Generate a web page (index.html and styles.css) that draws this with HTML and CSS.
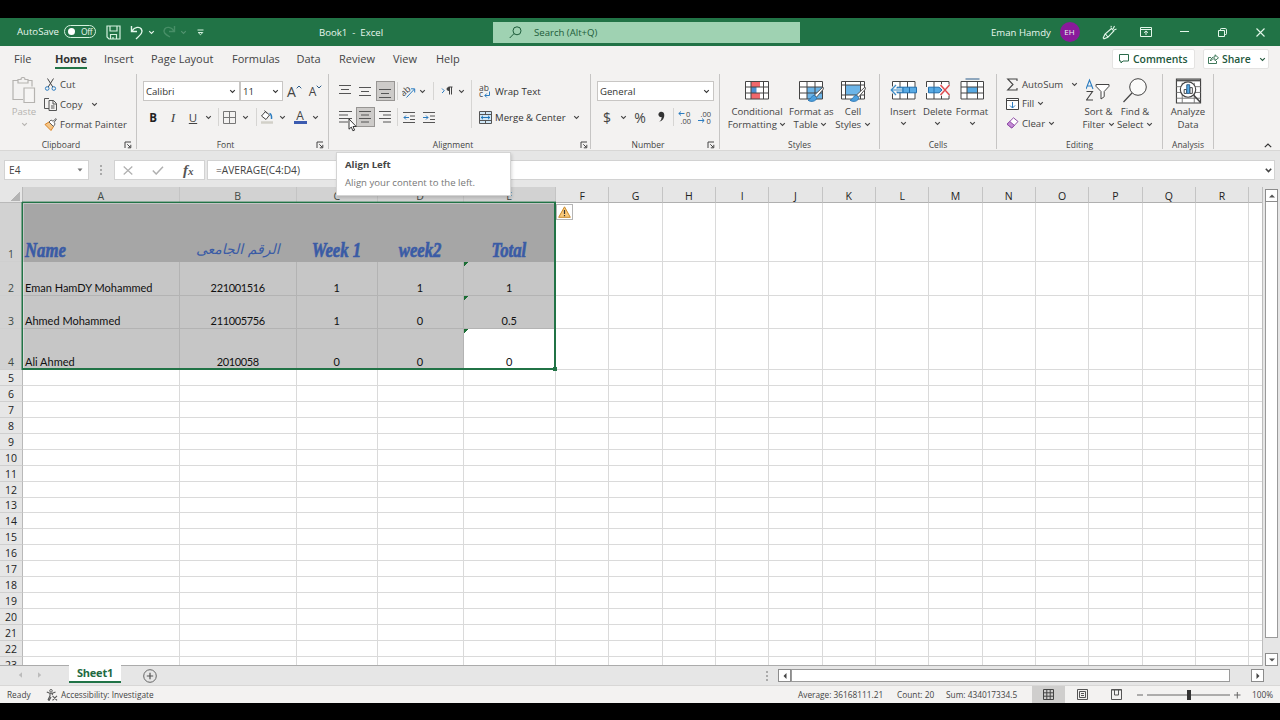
FILE: index.html
```html
<!DOCTYPE html>
<html lang="en">
<head>
    <title>Book1 - Excel</title>
    <meta charset="UTF-8">
    <meta name="viewport" content="width=device-width, initial-scale=1.0">
    <link rel="stylesheet" href="styles.css">
</head>
<body>
    <svg class="defs" width="0" height="0">
        <symbol id="chev" viewBox="0 0 7 5"><path d="M1.2 1.2 3.5 3.5 5.8 1.2" fill="none" stroke="currentColor" stroke-width="1.1"/></symbol>
        <symbol id="launch" viewBox="0 0 8 8"><path d="M1 7V1h6M3.3 3.3l3 3M6.8 3.8v3h-3" fill="none" stroke="currentColor" stroke-width="1"/></symbol>
        <symbol id="brush" viewBox="0 0 18 18"><path d="M17 1 8.5 9l2 2.2L17.4 3z" fill="#fff" stroke="#555" stroke-width="1"/><path d="M8.2 9.2c-3 .3-2.4 3.5-6.2 5 2.8 2.3 8.8 1.3 8.7-2.7z" fill="#4d9fdc" stroke="#2470ae" stroke-width=".8"/></symbol>
    </svg>

    <div class="window">
        <header class="titlebar">
            <span>AutoSave</span>
            <span class="toggle"><i></i>Off</span>
            <svg class="mid" width="15" height="15" viewBox="0 0 15 15"><path d="M1 1h13v13H3l-2-2zM4 1v5h7V1M4.5 14V9.5h6V14M7 12v2" fill="none" stroke="#d5f2df" stroke-width="1.2"/></svg>
            <svg class="mid" width="14" height="15" viewBox="0 0 14 15"><path d="M1.5 1v5.5H7M1.7 6.3C5 1.5 9.5 1.5 11.3 4c2 3 0 5-5.3 10" fill="none" stroke="#e3f7ea" stroke-width="1.4"/></svg>
            <svg class="mid" width="7" height="5"><use href="#chev"/></svg>
            <svg class="mid dim" width="14" height="15" viewBox="0 0 14 15"><path d="M12.5 1v5.5H7M12.3 6.3C9 1.5 4.5 1.5 2.7 4c-2 3 0 5 5.3 8" fill="none" stroke="#b8e0c6" stroke-width="1.4"/></svg>
            <svg class="mid dim" width="7" height="5"><use href="#chev"/></svg>
            <svg class="mid" width="7" height="7" viewBox="0 0 7 7"><path d="M.5 1h6M1.2 3.5h4.6L3.5 5.8z" fill="none" stroke="#d5f2df"/></svg>
            <span class="doc-name">Book1&nbsp; -&nbsp; Excel</span>
            <div class="search">
                <svg width="13" height="13" viewBox="0 0 13 13"><circle cx="8" cy="4.8" r="4" fill="none" stroke="#1d5c3a"/><path d="M5 7.6.7 12" stroke="#1d5c3a"/></svg>
                <span>Search (Alt+Q)</span>
            </div>
            <span class="user">Eman Hamdy</span>
            <span class="avatar mid">EH</span>
            <svg class="mid" width="15" height="15" viewBox="0 0 15 15"><path d="M9.5 3.5 3 9.2 1.2 13l.8.8 3.8-1.5 6-6.3zM3.5 9l2.4 3M11 4l1.5-3M12 5l2.5-1M9 2.5 9.3.8" fill="none" stroke="#e3f7ea" stroke-width="1.1"/></svg>
            <svg class="mid" width="12" height="10" viewBox="0 0 12 10"><path d="M.5.5h11v9H.5zM.5 2.5h11M6 8V4M4 5.8 6 3.9l2 1.9" fill="none" stroke="#e3f7ea"/></svg>
            <svg class="mid" width="9" height="2"><path d="M0 .5h9" stroke="#e3f7ea"/></svg>
            <svg class="mid" width="9" height="9" viewBox="0 0 9 9"><path d="M.5 2.5h6v6h-6zM2.5 2.5V1.2q0-.7.7-.7h4q1.3 0 1.3 1.3v4q0 .7-.7.7H6.5" fill="none" stroke="#e3f7ea"/></svg>
            <svg class="close" width="9" height="9"><path d="M.5.5l8 8M8.5.5l-8 8" stroke="#e3f7ea" stroke-width="1.1"/></svg>
        </header>

        <nav class="tabs">
            <span>File</span>
            <span class="active"><b>Home</b></span>
            <span>Insert</span>
            <span>Page Layout</span>
            <span>Formulas</span>
            <span>Data</span>
            <span>Review</span>
            <span>View</span>
            <span>Help</span>
            <div class="tab-actions">
                <button class="comments"><svg width="10" height="10" viewBox="0 0 10 10"><path d="M.5.5h9v6.5H4L2 9V7H.5z" fill="none" stroke="#2b6b4a"/></svg>Comments</button>
                <button class="share"><svg width="11" height="10" viewBox="0 0 11 10"><path d="M3 3.5H.5v6h8V7M2.5 7c.3-3 2-4 4.5-4V.8l3.5 3L7 6.7V4.8C5 4.8 3.6 5.3 2.5 7z" fill="none" stroke="#2b6b4a" stroke-width=".9"/></svg>Share<svg class="share-chev" width="7" height="5"><use href="#chev"/></svg></button>
            </div>
        </nav>

        <section class="ribbon">
            <div class="group clipboard">
                <div class="group-body">
                    <div class="paste">
                        <svg width="24" height="27" viewBox="0 0 24 27"><path d="M6 3.5H1v19h10M16 3.5h4v6M6 6V2.5h3Q9 .5 11 .5t2 2h3V6z" fill="none" stroke="#b5b3b0" stroke-width="1.2"/><path d="M12 11h10.500v14.500H12z" fill="#f6f5f4" stroke="#b5b3b0" stroke-width="1.2"/></svg>
                        <span>Paste</span>
                        <svg width="7" height="5"><use href="#chev"/></svg>
                    </div>
                    <div class="clip-list">
                        <div><svg width="13" height="13" viewBox="0 0 13 13"><path d="M3.5.5 8.8 9M9.5.5 4.2 9" stroke="#444" fill="none"/><circle cx="3.2" cy="10.5" r="1.8" fill="none" stroke="#2b7cc0"/><circle cx="9.8" cy="10.5" r="1.8" fill="none" stroke="#2b7cc0"/></svg><span>Cut</span></div>
                        <div><svg width="13" height="13" viewBox="0 0 13 13"><path d="M5 10.5H.5v-10H5M5 2.5h4.5l3 3v7H5zM9 2.5V6h3.5M7 8h3.5M7 10h3.5" fill="none" stroke="#555"/></svg><span>Copy</span><svg class="chev-copy" width="7" height="5"><use href="#chev"/></svg></div>
                        <div><svg width="13" height="13" viewBox="0 0 13 13"><path d="M1 6.5 5 4l4.500 4.500L7 12.500z" fill="#f5c586" stroke="#d98324"/><path d="M5 4l2-2 2 1.2L12 .6l.6.6-2.500 3L11 6 9.500 8.500z" fill="#fff" stroke="#555" stroke-width=".9"/></svg><span>Format Painter</span></div>
                    </div>
                </div>
                <div class="group-label">Clipboard<svg width="8" height="8"><use href="#launch"/></svg></div>
            </div>

            <div class="group font">
                <div class="group-body two">
                    <div class="row font-pick">
                        <span class="select">Calibri<svg width="7" height="5"><use href="#chev"/></svg></span>
                        <span class="select">11<svg width="7" height="5"><use href="#chev"/></svg></span>
                        <span class="grow">A<svg width="6" height="4"><path d="M.7 3.300 3 1l2.300 2.300" fill="none" stroke="#2b5c8a"/></svg></span>
                        <span class="shrink">A<svg width="6" height="4"><path d="M.7.7 3 3 5.300.7" fill="none" stroke="#2b5c8a"/></svg></span>
                    </div>
                    <div class="row font-tools">
                        <b>B</b>
                        <i class="serif">I</i>
                        <u>U</u>
                        <svg width="7" height="5"><use href="#chev"/></svg>
                        <i class="sep"></i>
                        <svg width="13" height="13" viewBox="0 0 13 13"><path d="M.5.5h12v12H.5zM6.5.5v12M.5 6.5h12" fill="none" stroke="#777"/></svg>
                        <svg width="7" height="5"><use href="#chev"/></svg>
                        <i class="sep"></i>
                        <svg width="14" height="14" viewBox="0 0 14 14"><path d="M5.5 1.5 1.5 6 6 9.5 9.5 5zM4.5.5 7 3.5" fill="#fff" stroke="#444"/><path d="M9.5 3.5q2.500 1 2 5.500" fill="none" stroke="#2b7cc0" stroke-width="1.5"/><path d="M1 12.5h12" stroke="#d2d0c8" stroke-width="2.5"/></svg>
                        <svg width="7" height="5"><use href="#chev"/></svg>
                        <span class="font-color">A</span>
                        <svg width="7" height="5"><use href="#chev"/></svg>
                    </div>
                </div>
                <div class="group-label">Font<svg width="8" height="8"><use href="#launch"/></svg></div>
            </div>

            <div class="group alignment">
                <div class="group-body two">
                    <div class="row align-top">
                        <svg class="up" width="12" height="9"><path d="M0 .5h12M2 4.5h8M0 8.5h12" stroke="#555"/></svg>
                        <svg width="12" height="9"><path d="M0 .5h12M2 4.5h8M0 8.5h12" stroke="#555"/></svg>
                        <span class="pressed low"><svg width="12" height="9"><path d="M0 .5h12M2 4.5h8M0 8.5h12" stroke="#555"/></svg></span>
                        <i class="sep"></i>
                        <svg width="14" height="13" viewBox="0 0 14 13"><text x="-1" y="9" font-size="9" transform="rotate(-42 4 7)" fill="#444">ab</text><path d="M4.5 12.5 12.5 4M9 3.8h3.7v3.7" fill="none" stroke="#2b7cc0"/></svg>
                        <svg width="7" height="5"><use href="#chev"/></svg>
                        <i class="sep"></i>
                        <svg width="12" height="10" viewBox="0 0 12 10"><path d="M1 2.5 3.3 4.8 1 7" fill="none" stroke="#2b7cc0"/><path d="M8.5 1v7.5M10.5 1v7.5M11.5 1H7.5" fill="none" stroke="#444"/><path d="M8.5 1H7.5Q5.500 1.300 5.500 3t2 2h1z" fill="#444"/></svg>
                        <svg width="7" height="5"><use href="#chev"/></svg>
                        <i></i>
                        <svg width="12" height="13" viewBox="0 0 12 13"><text x="0" y="6.2" font-size="8.5" fill="#444">ab</text><text x="0" y="12" font-size="8.5" fill="#444">c</text><path d="M10.5 6.5v4H6M7.8 8.5 5.800 10.500l2 2" fill="none" stroke="#2b7cc0"/></svg>
                        <span class="text">Wrap Text</span>
                    </div>
                    <div class="row align-bottom">
                        <svg width="13" height="12"><path d="M0 .5h13M0 4h9M0 7.5h13M0 11h9" stroke="#555"/></svg>
                        <span class="pressed"><svg width="12" height="12"><path d="M0 .5h12M2 4h8M0 7.5h12M2 11h8" stroke="#555"/></svg></span>
                        <svg width="12" height="12"><path d="M0 .5h12M4 4h8M0 7.5h12M4 11h8" stroke="#555"/></svg>
                        <i class="sep"></i>
                        <svg width="12" height="11" viewBox="0 0 12 11"><path d="M0 .5h12M7 4h5M7 7.5h5M0 10.5h12" stroke="#555"/><path d="M6 5.5H1M3 3.5l-2 2 2 2" fill="none" stroke="#2b7cc0"/></svg>
                        <svg width="12" height="11" viewBox="0 0 12 11"><path d="M0 .5h12M7 4h5M7 7.5h5M0 10.5h12" stroke="#555"/><path d="M0 5.5h5M3 3.5l2 2-2 2" fill="none" stroke="#2b7cc0"/></svg>
                        <i class="sep tall"></i>
                        <svg width="13" height="13" viewBox="0 0 13 13"><path d="M.5.5h12v12H.5z" fill="#cfe7f7" stroke="#555"/><path d="M.5 3.5h12M.5 9.5h12M6.5.5v3M6.5 9.5v3" stroke="#555"/><path d="M2 6.5h9M4 4.8 2.200 6.500 4 8.200M9 4.8l1.800 1.700L9 8.200" fill="none" stroke="#1c74b8"/></svg>
                        <span class="text">Merge &amp; Center</span>
                        <svg width="7" height="5"><use href="#chev"/></svg>
                    </div>
                </div>
                <div class="group-label">Alignment<svg width="8" height="8"><use href="#launch"/></svg></div>
            </div>

            <div class="group number">
                <div class="group-body two">
                    <div class="row"><span class="select">General<svg width="7" height="5"><use href="#chev"/></svg></span></div>
                    <div class="row number-tools">
                        <span class="sym">$</span>
                        <svg width="7" height="5"><use href="#chev"/></svg>
                        <span class="sym">%</span>
                        <svg width="7" height="12" viewBox="0 0 7 12"><path d="M3.2.8a2.700 2.700 0 1 0 .6 5.300Q3.700 9 1.200 10.800 6.500 9 6.300 4 6 .8 3.200.8z" fill="#333"/></svg>
                        <i class="sep"></i>
                        <svg width="14" height="14" viewBox="0 0 14 14"><text x="8" y="6.5" font-size="7.5" fill="#444">0</text><text x="2.5" y="13.5" font-size="7.5" fill="#444">.00</text><path d="M6.5 3.5H.8M3 1.5l-2.200 2L3 5.500" fill="none" stroke="#2b7cc0"/></svg>
                        <svg width="14" height="14" viewBox="0 0 14 14"><text x="2.5" y="6.5" font-size="7.5" fill="#444">.00</text><text x="8.5" y="13.5" font-size="7.5" fill="#444">0</text><path d="M0 10.5h6M4 8.5l2.200 2L4 12.500" fill="none" stroke="#2b7cc0"/></svg>
                    </div>
                </div>
                <div class="group-label">Number<svg width="8" height="8"><use href="#launch"/></svg></div>
            </div>

            <div class="group styles">
                <div class="group-body">
                    <div class="big"><svg width="26" height="26" viewBox="0 0 26 26"><path d="M1.5 3.5h23v17.500h-23z" fill="#fff"/><path d="M7 3.500h9v5.500H7zM7 15h9v6H7z" fill="#f0686c"/><path d="M7 9h5.500v6H7z" fill="#4d8fd0"/><path d="M1.500 3.500h23v17.500h-23zM1.500 9h23M1.500 15h23M7 3.500V21M19.500 3.500V21" fill="none" stroke="#444"/></svg>Conditional<br>Formatting <svg width="7" height="5"><use href="#chev"/></svg></div>
                    <div class="big"><svg width="26" height="26" viewBox="0 0 26 26"><path d="M1.500 3.500h23v17.500h-23z" fill="#fff"/><path d="M9 9h15.500v12H9z" fill="#6db5e8"/><path d="M1.500 3.500h23v17.500h-23zM1.500 9h23M1.500 15h23M9 3.500V21M17 3.500V21" fill="none" stroke="#444"/><use href="#brush" x="8" y="8" width="18" height="18"/></svg>Format as<br>Table <svg width="7" height="5"><use href="#chev"/></svg></div>
                    <div class="big"><svg width="26" height="26" viewBox="0 0 26 26"><path d="M1.500 3.500h23v17.500h-23z" fill="#fff" stroke="#444"/><path d="M5.500 7h15v10h-15z" fill="#6db5e8"/><path d="M5.500 3.500V21M20.500 3.500V21M1.500 7h23M1.500 17h23" fill="none" stroke="#444"/><use href="#brush" x="8" y="8" width="18" height="18"/></svg>Cell<br>Styles <svg width="7" height="5"><use href="#chev"/></svg></div>
                </div>
                <div class="group-label">Styles</div>
            </div>

            <div class="group cells">
                <div class="group-body">
                    <div class="big"><svg width="27" height="26" viewBox="0 0 27 26"><path d="M2.500 3.500H25V21H2.500zM10 3.500V21M17.500 3.500V21" fill="#fff" stroke="#444"/><path d="M7 9.200h19.500v5.600H7z" fill="#57aae4" stroke="#2470ae"/><path d="M13 9v6M19.500 9v6" stroke="#2470ae"/><path d="M6 7 1.200 12 6 17M1.200 12H12" fill="none" stroke="#f3f2f1" stroke-width="3"/><path d="M6 7 1.200 12 6 17M1.200 12H12" fill="none" stroke="#3a8cc8" stroke-width="1.2"/></svg>Insert<br><svg class="lone" width="7" height="5"><use href="#chev"/></svg></div>
                    <div class="big"><svg width="27" height="26" viewBox="0 0 27 26"><path d="M2.500 3.500H25V21H2.500zM10 3.500V21M17.500 3.500V21" fill="#fff" stroke="#444"/><path d="M0 9h27v6H0z" fill="#f3f2f1"/><path d="M4.500 9.200h10.500l3 2.800-3 2.800H4.500z" fill="#57aae4" stroke="#2470ae"/><path d="M10 9v6" stroke="#2470ae"/><path d="M16.500 7 25.500 17M25.500 7l-9 10" stroke="#f3f2f1" stroke-width="3"/><path d="M16.500 7 25.500 17M25.500 7l-9 10" stroke="#e0474c" stroke-width="1.3"/></svg>Delete<br><svg class="lone" width="7" height="5"><use href="#chev"/></svg></div>
                    <div class="big"><svg width="27" height="26" viewBox="0 0 27 26"><path d="M2 3.500h22.500V21H2z" fill="#fff"/><path d="M8 9h10.500v6H8z" fill="#57aae4"/><path d="M2 3.500h22.500V21H2zM2 9h22.500M2 15h22.500M8 3.500V21M18.500 3.500V21" fill="none" stroke="#444"/><path d="M6.500 1h14" stroke="#2b5c8a"/></svg>Format<br><svg class="lone" width="7" height="5"><use href="#chev"/></svg></div>
                </div>
                <div class="group-label">Cells</div>
            </div>

            <div class="group editing">
                <div class="group-body">
                    <div class="edit-list">
                        <div><svg width="12" height="13" viewBox="0 0 12 13"><path d="M10.5 3V1H1.200L6.500 6.500 1.200 12h9.300v-2" fill="none" stroke="#444" stroke-width="1.1"/></svg><span>AutoSum</span><svg class="chev-sum" width="7" height="5"><use href="#chev"/></svg></div>
                        <div><svg width="13" height="12" viewBox="0 0 13 12"><path d="M.5.5h12v11H.5zM.5 2.5h12" fill="#fff" stroke="#444"/><path d="M6.5 4v6M4 7.5 6.500 10 9 7.500" fill="none" stroke="#2b7cc0"/></svg><span>Fill</span><svg class="chev-near" width="7" height="5"><use href="#chev"/></svg></div>
                        <div><svg width="13" height="12" viewBox="0 0 13 12"><path d="M7.5.8 12 4.500 5.800 11 1 7.200z" fill="#fff" stroke="#8d4ba5"/><path d="M3.800 4.500 8.400 8.400 5.800 11 1 7.200z" fill="#c58bd6" stroke="#8d4ba5"/></svg><span>Clear</span><svg class="chev-near" width="7" height="5"><use href="#chev"/></svg></div>
                    </div>
                    <div class="big"><svg width="26" height="26" viewBox="0 0 26 26"><path d="M0 11 3.500 2 7 11M1.200 8h4.600" fill="none" stroke="#2b7cc0" stroke-width="1.1"/><path d="M.5 13.500h6l-6 8.500h6.500" fill="none" stroke="#444" stroke-width="1.1"/><path d="M10 6.500h13v1.800l-4.800 5.200v5.200l-3.200 2.300v-7.500L10 8.300z" fill="#fff" stroke="#444"/></svg>Sort &amp;<br>Filter <svg width="7" height="5"><use href="#chev"/></svg></div>
                    <div class="big"><svg width="26" height="26" viewBox="0 0 26 26"><circle cx="16" cy="9" r="8.300" fill="#fbfbfa" stroke="#444"/><path d="M10 15 1.500 24" stroke="#444" stroke-width="1.2"/></svg>Find &amp;<br>Select <svg width="7" height="5"><use href="#chev"/></svg></div>
                </div>
                <div class="group-label">Editing</div>
            </div>

            <div class="group analysis">
                <div class="group-body">
                    <div class="big"><svg width="27" height="26" viewBox="0 0 27 27"><path d="M1 1h25v25H1z" fill="#fff" stroke="#444" stroke-width="1.2"/><path d="M1 2.500h25" stroke="#555" stroke-width="2"/><path d="M1 9h25M1 15h25M1 21h25M7 5v21M19.500 5v21" stroke="#777"/><circle cx="13" cy="12" r="8" fill="#fff" stroke="#444" stroke-width="1.2"/><path d="M9 12h2.500v4H9zM15 10h2.500v6H15z" fill="#fff" stroke="#444"/><path d="M11.700 7h3v9h-3z" fill="#57aae4" stroke="#2f5f8a"/><path d="M19 18l7 7.500" stroke="#444" stroke-width="1.6"/></svg>Analyze<br>Data</div>
                </div>
                <div class="group-label">Analysis</div>
            </div>
            <svg class="collapse" width="8" height="5"><path d="M.8 4.200 4 1l3.200 3.200" fill="none" stroke="#333" stroke-width="1.2"/></svg>
        </section>

        <section class="formula-bar">
            <div class="name-box">E4<svg width="6" height="4"><path d="M.5.5h5L3 3.500z" fill="#777"/></svg></div>
            <i class="dots"></i>
            <div class="fx-box">
                <svg width="10" height="9"><path d="M.7.5l8.600 8M9.300.5.7 8.500" stroke="#b0b0b0" stroke-width="1.2"/></svg>
                <svg width="12" height="9"><path d="M.8 4.500 4.200 8 11 .8" fill="none" stroke="#b0b0b0" stroke-width="1.5"/></svg>
                <em>f<small>x</small></em>
            </div>
            <div class="formula">=AVERAGE(C4:D4)<svg width="7" height="5" viewBox="0 0 7 5"><path d="M.8.8 3.500 3.500 6.200.8" fill="none" stroke="#444" stroke-width="1.6"/></svg></div>
        </section>

        <main class="sheet-area">
            <div class="sheet" id="sheet">
                <div class="selection"></div>
                <div class="warning"><svg width="13" height="12" viewBox="0 0 13 12"><path d="M6.500.8 12.300 11.300H.7z" fill="#f9c87a" stroke="#c98a2b"/><path d="M6.500 4v4M6.500 9v1.300" stroke="#333" stroke-width="1.2"/></svg></div>
            </div>
            <div class="vscroll">
                <span class="arrow"><svg width="6" height="4"><path d="M0 3.500h6L3 .5z" fill="#555"/></svg></span>
                <span class="thumb"></span>
                <span class="arrow"><svg width="6" height="4"><path d="M0 .5h6L3 3.500z" fill="#555"/></svg></span>
            </div>
        </main>

        <footer class="sheet-tabs">
            <svg class="nav-arrows" width="24" height="6"><path d="M4 .3v5.400L.8 3zM20 .3v5.400L23.200 3z" fill="#bcbcbc"/></svg>
            <span class="sheet-tab">Sheet1</span>
            <svg class="add" width="14" height="14"><circle cx="7" cy="7" r="6.300" fill="none" stroke="#666"/><path d="M7 3.800v6.400M3.800 7h6.400" stroke="#555" stroke-width="1.2"/></svg>
            <i class="dots"></i>
            <div class="hscroll">
                <span class="arrow"><svg width="4" height="6"><path d="M3.500 0v6L.5 3z" fill="#444"/></svg></span>
                <span class="thumb"></span>
                <span class="arrow"><svg width="4" height="6"><path d="M.5 0v6l3-3z" fill="#444"/></svg></span>
            </div>
        </footer>

        <footer class="status">
            <span class="ready">Ready</span>
            <svg width="12" height="12" viewBox="0 0 12 12"><circle cx="5" cy="1.800" r="1.300" fill="none" stroke="#555" stroke-width=".9"/><path d="M.8 3 4 4.300v2.500L2 11M9.500 3 6.300 4.300V6M4 4.300h2.300M2 11l1.200.3L5 8M6.500 6.800l4.500 4.500M11 6.800 6.500 11.300" fill="none" stroke="#555" stroke-width="1.1"/></svg>
            <span class="access">Accessibility: Investigate</span>
            <span>Average: 36168111.21</span>
            <span>Count: 20</span>
            <span>Sum: 434017334.5</span>
            <span class="view on"><svg width="11" height="11" viewBox="0 0 11 11"><path d="M.5.5h10v10H.5zM.5 3.800h10M.5 7.200h10M3.800.5v10M7.200.5v10" fill="none" stroke="#444"/></svg></span>
            <span class="view"><svg width="11" height="11" viewBox="0 0 11 11"><path d="M.5.5h10v10H.5zM2.500 2.500h6v6h-6zM4 4.500h3M4 6.500h3" fill="none" stroke="#555"/></svg></span>
            <span class="view"><svg width="11" height="11" viewBox="0 0 11 11"><path d="M.5.5h10v10H.5zM3.500.5v5.500h4V.5M.5 1h10" fill="none" stroke="#555"/></svg></span>
            <svg class="slider" width="106" height="10" viewBox="0 0 106 10"><path d="M1 5h6M98 5h6.500M101.300 2v6.500" stroke="#666"/><path d="M11 5h83" stroke="#666"/><path d="M51 0h4v10h-4z" fill="#333"/></svg>
            <span class="zoom">100%</span>
        </footer>

        <div class="tooltip">
            <b>Align Left</b>
            <span>Align your content to the left.</span>
        </div>
        <svg class="cursor" width="9" height="14" viewBox="0 0 9 14"><path d="M1 1v10.200l2.300-2.100 1.600 3.700 1.700-.7L5 8.500h3.200z" fill="#fff" stroke="#222" stroke-width=".9"/></svg>
    </div>

    <script>
        // column widths (A-E are resized, the rest are default)
        const widths = [156.5, 117.5, 80.5, 86, 92.5];
        while (widths.length < 18) widths.push(53.33);
        const heights = [59, 34, 33, 41];
        while (heights.length < 23) heights.push(15.94);

        const data = [
            ['Name', 'الرقم الجامعى', 'Week 1', 'week2', 'Total'],
            ['Eman HamDY Mohammed', '221001516', '1', '1', '1'],
            ['Ahmed Mohammed', '211005756', '1', '0', '0.5'],
            ['Ali Ahmed', '2010058', '0', '0', '0']
        ];

        const sheet = document.getElementById('sheet');

        function add(parent, cls, text) {
            const el = document.createElement('div');
            el.className = cls;
            if (text) {
                const span = document.createElement('span');
                span.textContent = text;
                el.appendChild(span);
            }
            parent.appendChild(el);
            return el;
        }

        // header row
        const head = add(sheet, 'line head');
        add(head, 'corner');
        widths.forEach((w, c) => {
            const th = add(head, 'col-head' + (c < 5 ? ' picked' : ''), String.fromCharCode(65 + c));
            th.style.width = w + 'px';
        });
        add(head, 'col-head rest');

        // body rows
        heights.forEach((h, r) => {
            const line = add(sheet, 'line row-' + (r + 1));
            line.style.height = h + 'px';
            add(line, 'row-head' + (r < 4 ? ' picked' : ''), String(r + 1));
            widths.forEach((w, c) => {
                const text = data[r] && data[r][c];
                let cls = 'cell';
                if (text) cls += ' filled col-' + 'abcde'[c];
                if (text && r > 0 && c === 4) cls += ' flagged';
                if (r === 3 && c === 4) cls += ' current';
                add(line, cls, text).style.width = w + 'px';
            });
            add(line, 'cell rest');
        });
    </script>
</body>
</html>
```
FILE: styles.css
```css
* {
    box-sizing: border-box;
}
body {
    margin: 0;
    width: 1280px;
    height: 720px;
    padding: 18px 0 17px;
    overflow: hidden;
    background: #000;
    color: #444;
    font-family: 'Open Sans', 'Noto Sans', sans-serif;
    font-size: 9.6px;
    line-height: 13px;
}
svg {
    display: block;
    flex: none;
}
.defs {
    position: absolute;
}
.window {
    width: 1280px;
    height: 685px;
    background: #e6e6e6;
    display: flex;
    flex-direction: column;
}
.mid {
    justify-self: center;
}

/* title bar */
.titlebar {
    height: 28px;
    flex: none;
    display: grid;
    grid-template-columns: 47px 32px 34px 14px 14px 22px 6px 28px 105px 174px 307px 191px 64px 29px 50px 24px 53px 23px 46px;
    align-items: center;
    padding-left: 17px;
    background: #217346;
    color: #e8f6ed;
    white-space: nowrap;
}
.titlebar > span:first-child {
    padding-bottom: 1px;
}
.toggle {
    height: 13px;
    margin-bottom: 1px;
    border: 1px solid #d5f2df;
    border-radius: 7px;
    display: flex;
    align-items: center;
    gap: 6px;
    padding-left: 3px;
    font-size: 8.5px;
    letter-spacing: -0.3px;
}
.toggle i {
    width: 7px;
    height: 7px;
    border-radius: 50%;
    background: #fff;
}
.dim {
    opacity: 0.25;
}
.doc-name {
    grid-column: 10;
}
.search {
    height: 21px;
    display: flex;
    align-items: center;
    gap: 12px;
    padding-left: 16px;
    background: #9fd2b2;
    color: #1d5c3a;
}
.user {
    grid-column: 13;
}
.avatar {
    width: 20px;
    height: 20px;
    border-radius: 50%;
    background: #8a1a9b;
    font-size: 8px;
    line-height: 20px;
    text-align: center;
}
.close {
    margin-left: 21.5px;
}

/* tabs */
.tabs {
    height: 28px;
    flex: none;
    display: grid;
    grid-template-columns: 41px 49px 47px 81px 64.5px 42.5px 54px 43px 30px 1fr;
    padding: 0 11px 0 14px;
    background: #f3f2f1;
    font-size: 11px;
    line-height: 26px;
    white-space: nowrap;
}
.active b {
    display: inline-block;
    height: 23px;
    border-bottom: 2px solid #217346;
    color: #333;
    letter-spacing: -0.2px;
}
.tab-actions {
    display: flex;
    justify-content: flex-end;
    gap: 8px;
    padding-top: 3px;
}
.tab-actions button {
    height: 20px;
    display: flex;
    align-items: center;
    gap: 4px;
    padding: 0 0 0 6px;
    border: 1px solid #e4e3e2;
    border-radius: 2px;
    background: #fff;
    color: #22573c;
    font: 600 10.4px 'Open Sans', sans-serif;
}
.comments {
    width: 83px;
}
.share {
    width: 66px;
}
.tab-actions .share {
    padding-left: 4px;
    gap: 3px;
}
.share-chev {
    margin-left: 5px;
}

/* ribbon */
.ribbon {
    height: 77px;
    flex: none;
    display: flex;
    background: #f3f2f1;
    border-bottom: 1px solid #d8d7d6;
}
.group {
    height: 75px;
    flex: none;
    display: flex;
    flex-direction: column;
    border-right: 1px solid #c6c5c4;
}
.group-body {
    height: 64px;
    flex: none;
    display: flex;
    padding-top: 1px;
}
.group-body.two {
    flex-direction: column;
    padding: 4px 0 0 6px;
}
.group-label {
    display: flex;
    justify-content: center;
    font-size: 8.5px;
    position: relative;
    line-height: 14px;
}
.group-label svg {
    position: absolute;
    right: 4px;
    top: 3px;
}
.row {
    height: 26px;
    display: flex;
    align-items: center;
    white-space: nowrap;
}
.clipboard { width: 137px; }
.font { width: 192px; }
.alignment { width: 262px; }
.number { width: 129px; }
.styles { width: 160px; }
.cells { width: 117px; }
.editing { width: 166px; }
.analysis { width: 51px; }
.alignment .group-label { padding-right: 13px; }
.clipboard .group-label,
.font .group-label,
.number .group-label {
    padding-right: 14px;
}
.alignment .group-label svg { right: 2px; }

.paste {
    width: 44px;
    display: flex;
    flex-direction: column;
    align-items: center;
    padding: 2px 0 0 4px;
    color: #b5b3b0;
}
.paste span {
    margin: 1px 0 4px;
}
.clip-list div,
.edit-list div {
    height: 20px;
    display: flex;
    align-items: center;
    gap: 3px;
    white-space: nowrap;
}
.clip-list div {
    height: 19.7px;
}
.chev-copy {
    margin-left: 5px;
}
.select {
    height: 20px;
    display: flex;
    align-items: center;
    justify-content: space-between;
    padding: 0 3px 0 2px;
    border: 1px solid #c8c6c4;
    background: #fff;
    color: #333;
}
.font-pick .select:nth-child(1) { width: 97px; }
.font-pick .select:nth-child(2) { width: 43px; }
.number .select {
    width: 117px;
}
.grow,
.shrink {
    display: flex;
    font-size: 14px;
    margin-left: 4px;
}
.shrink {
    font-size: 12px;
    margin-left: 7px;
}
.font-tools,
.align-top,
.align-bottom,
.number-tools {
    display: grid;
    grid-template-rows: 26px;
    justify-items: center;
    align-items: center;
}
.font-tools {
    grid-template-columns: 20px 20px 20px 10px 10px 12px 20px 2px 20px 10px 26px 4px;
    font-size: 11.5px;
}
.font-tools b {
    color: #222;
}
.serif {
    font-family: 'Liberation Serif', serif;
    font-size: 13.5px;
}
.font-color {
    width: 13px;
    height: 14px;
    border-bottom: 3px solid #3b5bb0;
    font-size: 12px;
    line-height: 11px;
    text-align: center;
}
.sep {
    width: 1px;
    height: 18px;
    background: #d6d5d3;
}
.sep.tall {
    height: 48px;
    margin: -26px 0 0 29px;
}
.align-top {
    grid-template-columns: 20px 20px 20px 4px 20px 6px 16px 12px 16px 6px 20px 72px;
}
.align-bottom {
    grid-template-columns: 20px 20px 20px 4px 20px 20px 36px 20px 72px 18px;
}
.text {
    justify-self: start;
    color: #333;
}
.up {
    margin-bottom: 4px;
}
.pressed {
    width: 19px;
    height: 20px;
    display: grid;
    place-items: center;
    border: 1px solid #979593;
    background: #cdcbc9;
}
.pressed.low {
    padding-top: 5px;
}
.number-tools {
    grid-template-columns: 20px 12px 22px 20px 4px 20px 20px;
}
.sym {
    font-size: 14px;
}

.styles .group-body {
    display: grid;
    grid-template-columns: 64px 43px 42px;
    padding-left: 5px;
}
.cells .group-body {
    display: grid;
    grid-template-columns: 34px 35px 34px;
    padding-left: 6px;
}
.editing .group-body {
    display: grid;
    grid-template-columns: 74px 37px 36px;
    padding-left: 9px;
}
.analysis .group-body {
    display: grid;
}
.big {
    padding-top: 3px;
    text-align: center;
    white-space: nowrap;
}
.big svg {
    display: inline-block;
    vertical-align: 1px;
}
.big > svg:first-child {
    display: block;
    margin: 0 auto 1px;
}
.big .lone {
    vertical-align: 2px;
}
.edit-list div {
    height: 19.3px;
}
.edit-list svg {
    width: 13px;
}
.edit-list .chev-sum {
    width: 7px;
    margin-left: 5px;
}
.edit-list .chev-near {
    width: 7px;
}
.collapse {
    margin: 69px 0 0 50px;
}

/* formula bar */
.formula-bar {
    height: 36px;
    flex: none;
    display: flex;
    padding: 9px 5px 7px 4px;
    font-size: 10.2px;
    color: #444;
}
.formula-bar > div {
    height: 20px;
    display: flex;
    align-items: center;
    background: #fff;
    border: 1px solid #d2d2d2;
}
.name-box {
    width: 85px;
    justify-content: space-between;
    padding: 0 5px 0 4px;
}
.dots {
    width: 2px;
    height: 10px;
    margin: 5px 12px 0 11px;
    background: repeating-linear-gradient(#aaa 0 2px, transparent 2px 4px);
}
.fx-box {
    width: 91px;
    gap: 19px;
    padding-left: 8px;
}
.fx-box em {
    font: italic bold 15px 'Liberation Serif', serif;
    color: #555;
}
.fx-box small {
    font-size: 11px;
}
.formula {
    flex: 1;
    margin-left: 2px;
    justify-content: space-between;
    padding: 0 2px 0 8px;
}

/* sheet */
.sheet-area {
    height: 479px;
    flex: none;
    display: flex;
}
.sheet {
    width: 1263px;
    position: relative;
    overflow: hidden;
    border-bottom: 1px solid #ababab;
    border-right: 1px solid #bdbdbd;
}
.line {
    display: flex;
}
.head {
    height: 16px;
}
.corner {
    width: 23px;
    flex: none;
    background: linear-gradient(135deg, transparent 50%, #b4b4b4 50%) 10px 4px / 10px 10px no-repeat;
    border-right: 1px solid #b9b9b9;
    border-bottom: 1px solid #b9b9b9;
}
.col-head {
    flex: none;
    border-right: 1px solid #c4c4c4;
    border-bottom: 1px solid #b0b0b0;
    color: #222;
    font-size: 10.5px;
    line-height: 18px;
    text-align: center;
}
.col-head.picked {
    background: #d2d2d2;
    color: #3f4a44;
}
.col-head.rest,
.cell.rest {
    flex: 1;
    border-right: 0;
}
.row-head {
    width: 23px;
    flex: none;
    display: flex;
    align-items: flex-end;
    justify-content: center;
    border-right: 1px solid #b9b9b9;
    border-bottom: 1px solid #cfcfcf;
    color: #222;
    font-size: 10.5px;
    line-height: 14px;
}
.row-head.picked {
    background: #d2d2d2;
    color: #3f4a44;
}
.cell {
    flex: none;
    display: flex;
    align-items: flex-end;
    justify-content: center;
    background: #fff;
    border-right: 1px solid #dadada;
    border-bottom: 1px solid #dadada;
    color: #111;
    font-family: Lato, sans-serif;
    font-size: 11px;
    line-height: 14px;
    white-space: nowrap;
}
.filled {
    background: #c6c6c6;
    border-color: #b3b3b3;
}
.cell.col-a {
    justify-content: flex-start;
    padding-left: 2px;
}
.col-b {
    letter-spacing: -0.35px;
}
.row-1 .filled {
    background: #a6a6a6;
    border-color: #a6a6a6;
    color: #3a5ba5;
    font: italic bold 22px 'Liberation Serif', serif;
    line-height: 22px;
}
.row-1 .filled span {
    transform: scaleX(0.76);
    -webkit-text-stroke: 0.7px #3a5ba5;
}
.row-1 .col-a span {
    transform-origin: left;
}
.row-1 .cell.col-b {
    font: italic 14px 'DejaVu Sans', sans-serif;
    line-height: 23px;
    letter-spacing: 0;
}
.row-1 .col-b span {
    transform: none;
    -webkit-text-stroke: 0;
}
.flagged {
    background: linear-gradient(135deg, #1b6e35 3.5px, #c6c6c6 3.5px);
}
.current {
    background: linear-gradient(135deg, #1b6e35 3.5px, #fff 3.5px);
}
.selection {
    position: absolute;
    left: 22px;
    top: 15px;
    width: 534px;
    height: 168px;
    border: 1px solid #217346;
    border-right-width: 2px;
    border-bottom-width: 2px;
    box-shadow: inset 1px 1px 0 rgba(255, 255, 255, 0.35), 0 -1px 0 rgba(33, 115, 70, 0.4), -1px 0 0 rgba(33, 115, 70, 0.5);
}
.selection::after {
    content: '';
    position: absolute;
    right: -3px;
    bottom: -3px;
    width: 4px;
    height: 4px;
    background: #217346;
}
.warning {
    position: absolute;
    left: 556px;
    top: 17px;
    width: 17px;
    height: 16px;
    display: grid;
    place-items: center;
    background: #fff;
    border: 1px solid #b5b5b5;
}
.vscroll {
    width: 17px;
    display: flex;
    flex-direction: column;
    padding: 2px 2px 0;
}
.arrow {
    width: 13px;
    height: 13px;
    flex: none;
    display: grid;
    place-items: center;
    background: #fff;
    border: 1px solid #8c8c8c;
}
.thumb {
    background: #fff;
    border: 1px solid #9a9a9a;
}
.vscroll .thumb {
    height: 436px;
    border-top: 0;
}
.vscroll .arrow:last-child {
    margin-top: 15px;
}

/* sheet tabs */
.sheet-tabs {
    height: 19px;
    flex: none;
    display: flex;
    align-items: flex-start;
}
.nav-arrows {
    margin: 6px 0 0 18px;
}
.sheet-tab {
    width: 52px;
    height: 18px;
    margin: -1px 0 0 27px;
    position: relative;
    background: #fff;
    border-bottom: 2px solid #217346;
    color: #1e6a41;
    font-size: 11px;
    font-weight: bold;
    letter-spacing: -0.2px;
    line-height: 16px;
    text-align: center;
}
.add {
    margin: 3px 0 0 22px;
}
.sheet-tabs .dots {
    margin: 5px 0 0 609px;
}
.hscroll {
    display: flex;
    margin: 3px 0 0 10px;
}
.hscroll .thumb {
    width: 439px;
    height: 13px;
    margin-right: 21px;
}

/* status bar */
.status {
    height: 18px;
    flex: none;
    display: grid;
    grid-template-columns: 39px 15px 737px 99px 49px 86px 33px 34px 34px 119px 1fr;
    align-items: center;
    padding-left: 7px;
    background: #f3f2f1;
    border-top: 1px solid #d8d7d6;
    font-size: 8.3px;
    white-space: nowrap;
}
.view {
    height: 17px;
    display: grid;
    place-items: center;
}
.view.on {
    background: #cfcecd;
}
.slider {
    margin-left: 3px;
}

.tooltip {
    position: absolute;
    left: 336px;
    top: 152px;
    width: 175px;
    height: 44px;
    display: flex;
    flex-direction: column;
    gap: 5px;
    padding: 5px 8px;
    background: #fff;
    border: 1px solid #d4d4d4;
    box-shadow: 1px 2px 3px rgba(0, 0, 0, 0.15);
    color: #777;
}
.tooltip b {
    color: #444;
}
.cursor {
    position: absolute;
    left: 348px;
    top: 118px;
}
```
